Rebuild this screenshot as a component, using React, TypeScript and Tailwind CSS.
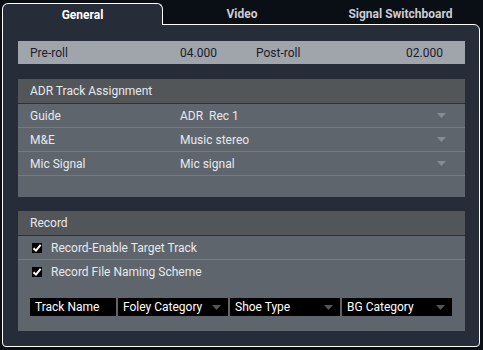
import React from "react";

const Arrow = ({ color = "#858b92" }: { color?: string }) => (
  <svg width="9" height="5" viewBox="0 0 9 5" className="shrink-0">
    <polygon points="0,0 9,0 4.5,5" fill={color} />
  </svg>
);

const Check = () => (
  <div className="w-[10px] h-[10px] bg-black flex items-center justify-center shrink-0">
    <svg width="10" height="10" viewBox="0 0 10 10">
      <path d="M1.5 5.2 L4 7.6 L8.6 1.8" stroke="#ffffff" strokeWidth="2" fill="none" />
    </svg>
  </div>
);

const AdrRow = ({ label, value }: { label: string; value: string }) => (
  <div className="h-[24px] flex items-center border-b border-[#737a80] pl-[12px] pr-[19px]">
    <span className="w-[150px]">{label}</span>
    <span className="flex-1 whitespace-pre">{value}</span>
    <Arrow />
  </div>
);

const Combo = ({ label, w, arrow }: { label: string; w: string; arrow: boolean }) => (
  <div className={`${w} h-[18px] bg-black text-white flex items-center pl-[5px] pr-[7px]`}>
    <span className="flex-1">{label}</span>
    {arrow && <Arrow color="#50555b" />}
  </div>
);

export default function App() {
  return (
    <div className="w-[483px] h-[350px] bg-[#0a0e15] pt-[3px] pl-[2px] pr-[3px] font-['Roboto',sans-serif] text-[12px] text-[#e6e9ed] overflow-hidden">
      <div className="flex h-[22px] relative z-10 -mb-px">
        <div className="w-[161px] h-[22px] border-l border-t border-r border-white rounded-t-[6px] bg-[#272d38] flex items-center justify-center font-bold text-white">
          General
        </div>
        <div className="w-[158px] flex items-center justify-center font-bold text-[#c9cdd3]">Video</div>
        <div className="flex-1 flex items-center justify-center font-bold text-[#c9cdd3]">Signal Switchboard</div>
      </div>
      <div className="h-[323px] border border-white rounded-tr-[6px] rounded-b-[4px] bg-[#272d38] pt-[16px] pl-[15px] pr-[14px]">
        <div className="h-[23px] bg-[#a0a5ac] text-[#1a1b2e] flex items-center pl-[12px]">
          <span className="w-[150px]">Pre-roll</span>
          <span className="w-[76px]">04.000</span>
          <span className="w-[150px]">Post-roll</span>
          <span>02.000</span>
        </div>
        <div className="mt-[15px] h-[118px] bg-[#5e656c]">
          <div className="h-[25px] bg-[#525659] border-b border-[#2c323a] flex items-center pl-[12px]">ADR Track Assignment</div>
          <AdrRow label="Guide" value="ADR  Rec 1" />
          <AdrRow label="M&E" value="Music stereo" />
          <AdrRow label="Mic Signal" value="Mic signal" />
        </div>
        <div className="mt-[14px] h-[120px] bg-[#5e656c]">
          <div className="h-[25px] bg-[#525659] border-b border-[#2c323a] flex items-center pl-[12px]">Record</div>
          <div className="h-[24px] border-b border-[#737a80] flex items-center pl-[14px] gap-[9px]">
            <Check />
            <span>Record-Enable Target Track</span>
          </div>
          <div className="h-[24px] flex items-center pl-[14px] gap-[9px]">
            <Check />
            <span>Record File Naming Scheme</span>
          </div>
          <div className="mt-[14px] flex gap-[2px] pl-[12px]">
            <Combo label="Track Name" w="w-[86px]" arrow={false} />
            <Combo label="Foley Category" w="w-[110px]" arrow />
            <Combo label="Shoe Type" w="w-[110px]" arrow />
            <Combo label="BG Category" w="w-[110px]" arrow />
          </div>
        </div>
      </div>
    </div>
  );
}
